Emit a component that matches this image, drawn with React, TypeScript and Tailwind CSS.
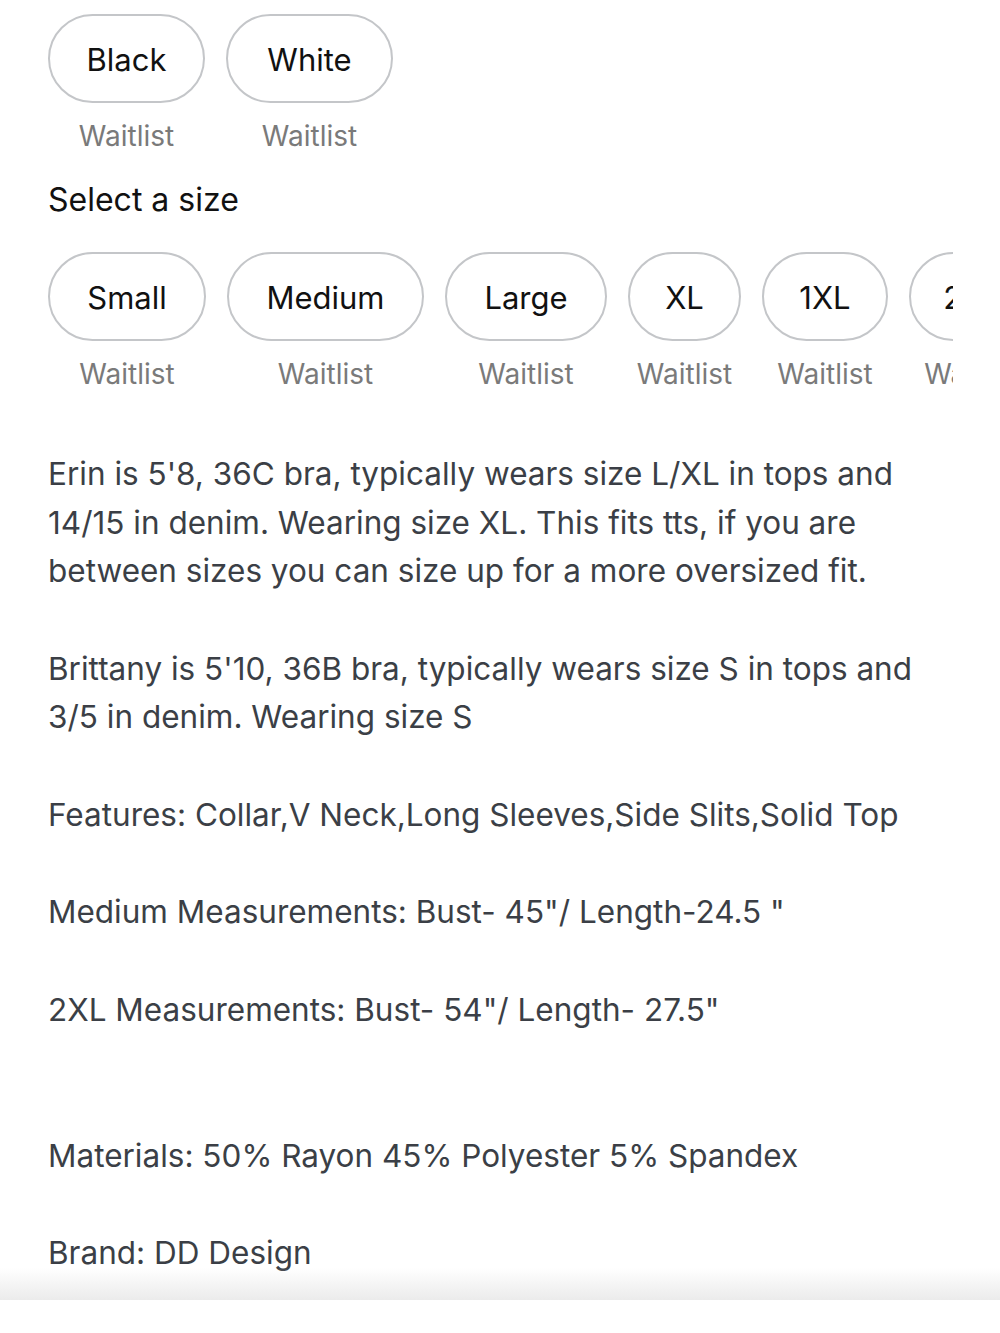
import React from 'react'

const colors = [
  { label: 'Black', w: 'w-[157px]' },
  { label: 'White', w: 'w-[167px]' },
]
const sizes = [
  { label: 'Small', w: 'w-[158px]' },
  { label: 'Medium', w: 'w-[197px]' },
  { label: 'Large', w: 'w-[162px]' },
  { label: 'XL', w: 'w-[113px]' },
  { label: '1XL', w: 'w-[126px]' },
  { label: '2XL', w: 'w-[126px]' },
]

function Option({ label, w }: { label: string; w: string }) {
  return (
    <div className={`flex shrink-0 flex-col items-center ${w}`}>
      <div className="flex h-[89px] w-full items-center justify-center rounded-full border-2 border-[#c4c6c9] pt-[4px] text-[31px] text-[#111]">
        {label}
      </div>
      <div className="mt-[16px] text-[28px] leading-[34px] text-[#7a7a7a]">Waitlist</div>
    </div>
  )
}

const lines = [
  "Erin is 5'8, 36C bra, typically wears size L/XL in tops and",
  '14/15 in denim. Wearing size XL. This fits tts, if you are',
  'between sizes you can size up for a more oversized fit.',
  '',
  "Brittany is 5'10, 36B bra, typically wears size S in tops and",
  '3/5 in denim. Wearing size S',
  '',
  'Features: Collar,V Neck,Long Sleeves,Side Slits,Solid Top',
  '',
  'Medium Measurements: Bust- 45"/ Length-24.5 "',
  '',
  '2XL Measurements: Bust- 54"/ Length- 27.5"',
  '',
  '',
  'Materials: 50% Rayon 45% Polyester 5% Spandex',
  '',
  'Brand: DD Design',
]

export default function App() {
  return (
    <div className="relative h-[1333px] w-[1000px] overflow-hidden bg-white" style={{ fontFamily: 'Inter, "Noto Sans", sans-serif' }}>
      <div className="pl-[48px] pt-[14px]">
        <div className="flex gap-[21px]">
          {colors.map((c) => (
            <Option key={c.label} label={c.label} w={c.w} />
          ))}
        </div>
        <div className="mt-[27px] text-[32px] leading-[40px] text-[#111]">Select a size</div>
        <div className="mt-[32px] flex w-[905px] gap-[21px] overflow-hidden">
          {sizes.map((s) => (
            <Option key={s.label} label={s.label} w={s.w} />
          ))}
        </div>
        <div className="mt-[59px] text-[31.5px] text-[#3b3f46]">
          {lines.map((l, i) => (
            <div key={i} className="h-[48.7px] whitespace-nowrap leading-[48.7px]">
              {l}
            </div>
          ))}
        </div>
      </div>
      <div className="absolute inset-x-0 bottom-[33px] h-[32px] bg-gradient-to-b from-white/0 to-[#ebebeb]" />
    </div>
  )
}
